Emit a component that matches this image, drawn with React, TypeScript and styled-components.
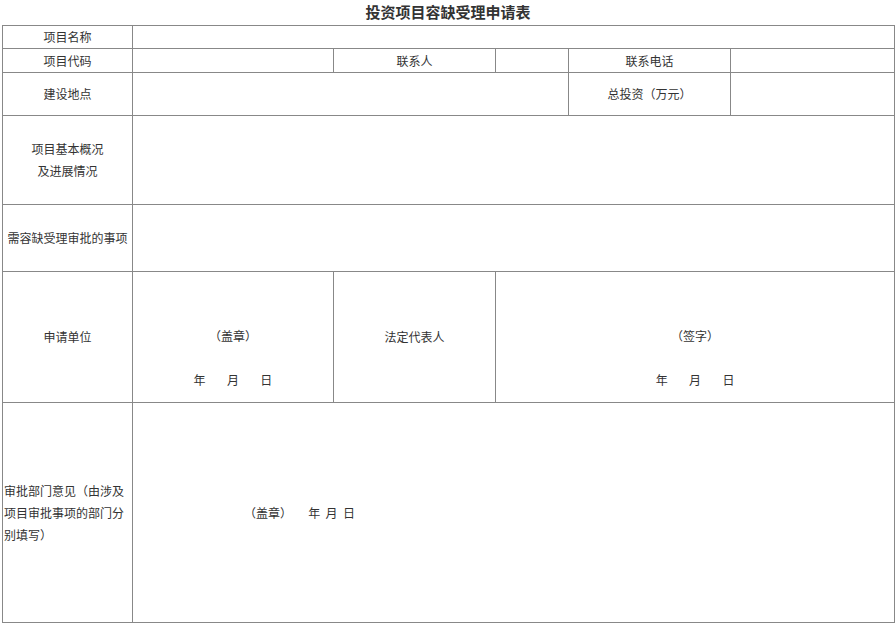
import React from 'react';
import styled, { createGlobalStyle } from 'styled-components';

const Global = createGlobalStyle`
  body {
    margin: 0;
    background: #fff;
    font-family: "Microsoft YaHei", "Noto Sans CJK SC", sans-serif;
    color: #333;
  }
`;

const S = {
    Page: styled.div`
        width: 896px;
        padding: 0 2px;
        box-sizing: border-box;
    `,
    Title: styled.h1`
        margin: 0;
        height: 25px;
        line-height: 24px;
        text-align: center;
        font-size: 15px;
        font-weight: bold;
        color: #333;
    `,
    Table: styled.table`
        width: 892px;
        border-collapse: collapse;
        table-layout: fixed;
        border: 1px solid #333;
        font-size: 12px;
    `,
    Row: styled.tr<{ $h: number }>`
        height: ${p => p.$h}px;
    `,
    Cell: styled.td<{ $align?: string; $valign?: string }>`
        border: 1px solid #888;
        padding: 0 1px;
        text-align: ${p => p.$align || 'center'};
        vertical-align: ${p => p.$valign || 'middle'};
        line-height: 22px;
        color: #333;
    `,
    Stack: styled.div`
        display: flex;
        flex-direction: column;
        align-items: center;
        gap: 28px;
        padding-top: 56px;
        line-height: 16px;
        height: 130px;
        box-sizing: border-box;
    `,
    Date: styled.span`
        word-spacing: 8px;
        white-space: pre;
    `,
    Opinion: styled.div`
        padding-left: 110px;
        white-space: pre;
    `,
};

const App = () => (
    <>
        <Global />
        <S.Page>
            <S.Title>投资项目容缺受理申请表</S.Title>
            <S.Table>
                <colgroup>
                    <col style={{ width: 130 }} />
                    <col style={{ width: 201 }} />
                    <col style={{ width: 162 }} />
                    <col style={{ width: 73 }} />
                    <col style={{ width: 162 }} />
                    <col style={{ width: 164 }} />
                </colgroup>
                <tbody>
                    <S.Row $h={22}>
                        <S.Cell>项目名称</S.Cell>
                        <S.Cell colSpan={5} />
                    </S.Row>
                    <S.Row $h={24}>
                        <S.Cell>项目代码</S.Cell>
                        <S.Cell />
                        <S.Cell>联系人</S.Cell>
                        <S.Cell />
                        <S.Cell>联系电话</S.Cell>
                        <S.Cell />
                    </S.Row>
                    <S.Row $h={43}>
                        <S.Cell>建设地点</S.Cell>
                        <S.Cell colSpan={3} />
                        <S.Cell>总投资（万元）</S.Cell>
                        <S.Cell />
                    </S.Row>
                    <S.Row $h={89}>
                        <S.Cell>项目基本概况<br />及进展情况</S.Cell>
                        <S.Cell colSpan={5} />
                    </S.Row>
                    <S.Row $h={67}>
                        <S.Cell>需容缺受理审批的事项</S.Cell>
                        <S.Cell colSpan={5} />
                    </S.Row>
                    <S.Row $h={130}>
                        <S.Cell>申请单位</S.Cell>
                        <S.Cell $valign="top">
                            <S.Stack>
                                <span>（盖章）</span>
                                <S.Date>年  月  日</S.Date>
                            </S.Stack>
                        </S.Cell>
                        <S.Cell>法定代表人</S.Cell>
                        <S.Cell colSpan={3} $valign="top">
                            <S.Stack>
                                <span>（签字）</span>
                                <S.Date>年  月  日</S.Date>
                            </S.Stack>
                        </S.Cell>
                    </S.Row>
                    <S.Row $h={220}>
                        <S.Cell $align="left">审批部门意见（由涉及项目审批事项的部门分别填写）</S.Cell>
                        <S.Cell colSpan={5} $align="left">
                            <S.Opinion>（盖章）      年  月  日</S.Opinion>
                        </S.Cell>
                    </S.Row>
                </tbody>
            </S.Table>
        </S.Page>
    </>
);

export default App;
